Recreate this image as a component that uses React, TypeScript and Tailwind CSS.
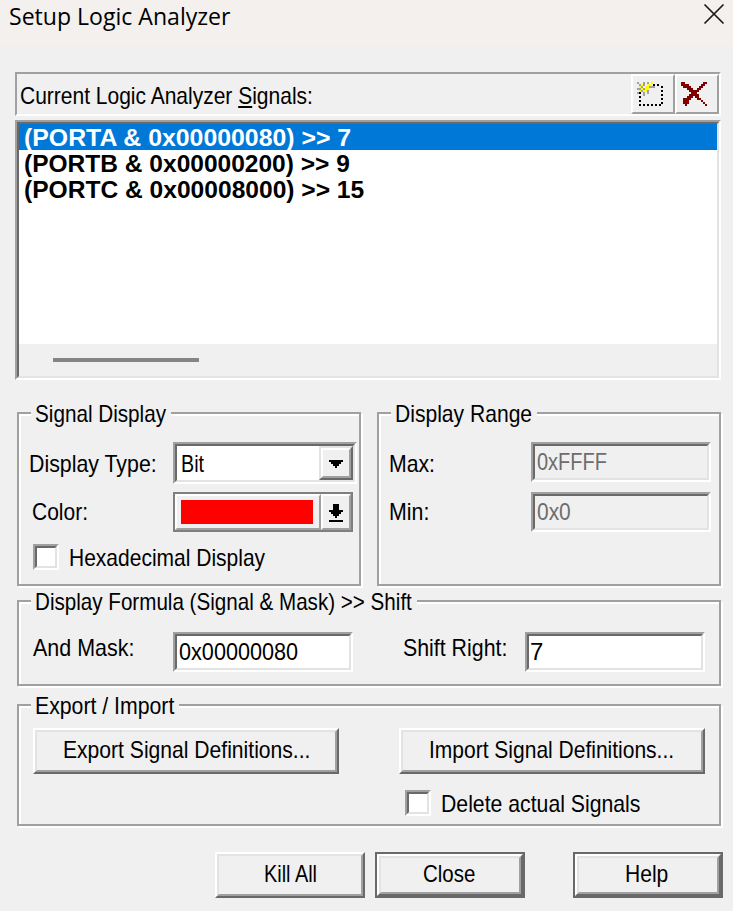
import { useLayoutEffect, useRef, useState, type ReactNode } from "react";
import clsx from "clsx";

/** Single line of dialog text, condensed horizontally to the given width. */
function Fit({ w, className, children }: { w: number; className?: string; children: ReactNode }) {
  const ref = useRef<HTMLSpanElement>(null);
  const [scale, setScale] = useState(1);
  useLayoutEffect(() => {
    if (ref.current) setScale(w / ref.current.offsetWidth);
  }, [w]);
  return (
    <span className={clsx("block h-6 shrink-0 text-[24px] leading-6 whitespace-nowrap", className)} style={{ width: w }}>
      <span
        ref={ref}
        className="inline-block origin-left"
        style={{ transform: `translate(1px, 1px) scaleX(${scale})` }}
      >
        {children}
      </span>
    </span>
  );
}

function Pixels({ rows, className }: { rows: string[]; className?: string }) {
  const colors: Record<string, string> = { G: "#a0a0a0", Y: "#ffff00", K: "#000000", R: "#800000" };
  return (
    <svg width={26} height={26} viewBox="0 0 13 13" shapeRendering="crispEdges" className={className}>
      {rows.flatMap((row, y) =>
        [...row].map((c, x) => (colors[c] ? <rect key={`${x}-${y}`} x={x} y={y} width={1} height={1} fill={colors[c]} /> : null)),
      )}
    </svg>
  );
}

const NEW_ICON = [
  "G..G.G.Y.....",
  ".GYG.YY.K.K..",
  ".YG.YYGGG...K",
  "GGYGYY.......",
  ".YGYYG......K",
  "GK.G.G.......",
  "...G........K",
  ".K...........",
  "............K",
  ".K...........",
  "............K",
  ".K.K.K.K.K.K.",
];

const DELETE_ICON = [
  "RR.........RR",
  "RRRR......RR.",
  ".RRRR....RR..",
  "...RRR..RR...",
  "....RRRRR....",
  ".....RRR.....",
  "....RRRRR....",
  "...RRR.RR....",
  ".RRRR...RR...",
  ".RRR......R..",
  ".RRR.......R.",
  "..R.........R",
];

function Sunken({ className, children }: { className?: string; children?: ReactNode }) {
  return (
    <div className={clsx("shrink-0 border-2 border-t-[#a0a0a0] border-r-white border-b-white border-l-[#a0a0a0]", className)}>
      <div className="flex h-full w-full border-2 border-t-[#696969] border-r-[#e3e3e3] border-b-[#e3e3e3] border-l-[#696969]">
        {children}
      </div>
    </div>
  );
}

function Raised({ className, children }: { className?: string; children?: ReactNode }) {
  return (
    <div className={clsx("shrink-0 border-2 border-t-white border-r-[#696969] border-b-[#696969] border-l-white", className)}>
      <div className="flex h-full w-full justify-center border-2 border-t-[#e3e3e3] border-r-[#a0a0a0] border-b-[#a0a0a0] border-l-[#e3e3e3]">
        {children}
      </div>
    </div>
  );
}

function Check({ className }: { className?: string }) {
  return <Sunken className={clsx("size-[26px] bg-white", className)} />;
}

function Group({ title, w, className, children }: { title: string; w: number; className?: string; children: ReactNode }) {
  return (
    <section
      className={clsx(
        "flex shrink-0 flex-col border-2 border-[#a0a0a0] shadow-[2px_2px_0_#fff,inset_2px_2px_0_#fff]",
        className,
      )}
    >
      <div className="-mt-[13px] ml-3 self-start bg-[#f0f0f0] pr-[6px] pl-[3px]">
        <Fit w={w}>{title}</Fit>
      </div>
      {children}
    </section>
  );
}

export default function App() {
  const signals = [
    { text: "(PORTA & 0x00000080) >> 7", w: 327, selected: true },
    { text: "(PORTB & 0x00000200) >> 9", w: 326, selected: false },
    { text: "(PORTC & 0x00008000) >> 15", w: 340, selected: false },
  ];

  return (
    <div className="flex h-[911px] w-[733px] flex-col overflow-hidden bg-[#f0f0f0] font-['Liberation_Sans',Arial,sans-serif] text-black">
      <header className="flex h-[45px] shrink-0 items-start justify-between bg-[#f4f0ee] pl-2">
        <Fit w={221} className="mt-[3px] font-['Open_Sans',sans-serif]">
          Setup Logic Analyzer
        </Fit>
        <svg width={22} height={22} viewBox="0 0 22 22" className="mt-[3px] mr-2" stroke="#1a1a1a" strokeWidth={1.7}>
          <path d="M1.5 1.5 20.5 20.5M20.5 1.5 1.5 20.5" />
        </svg>
      </header>

      <div className="mt-[27px] ml-[15px] flex h-11 w-[706px] shrink-0 border-2 border-t-[#a0a0a0] border-r-white border-b-white border-l-[#a0a0a0]">
        <div className="flex flex-1 pt-[9px] pl-[2px]">
          <Fit w={293}>
            Current Logic Analyzer <span className="underline decoration-2 underline-offset-2">S</span>ignals:
          </Fit>
        </div>
        <div className="h-10 w-11 border-2 border-t-white border-r-[#a0a0a0] border-b-[#a0a0a0] border-l-white pt-[6px] pl-1">
          <Pixels rows={NEW_ICON} />
        </div>
        <div className="h-10 w-11 border-2 border-t-white border-r-[#a0a0a0] border-b-[#a0a0a0] border-l-white pt-[6px] pl-1">
          <Pixels rows={DELETE_ICON} />
        </div>
      </div>

      <Sunken className="mt-1 ml-[15px] h-[260px] w-[706px]">
        <div className="flex w-full flex-col bg-white">
          {signals.map((s) => (
            <div key={s.text} className={clsx("h-[26px] pt-[1px] pl-1 font-bold", s.selected && "bg-[#0078d7] text-white")}>
              <Fit w={s.w}>{s.text}</Fit>
            </div>
          ))}
          <div className="mt-auto h-8 bg-[#f0f0f0] pt-[14px] pl-[34px]">
            <div className="h-1 w-[146px] bg-[#858585]" />
          </div>
        </div>
      </Sunken>

      <div className="mt-8 ml-[17px] flex shrink-0 gap-4">
        <Group title="Signal Display" w={131} className="h-[174px] w-[344px]">
          <div className="mt-[17px] flex h-[42px]">
            <Fit w={128} className="mt-[9px] ml-[9px]">Display Type:</Fit>
            <Sunken className="ml-[17px] h-[42px] w-[184px] bg-white">
              <Fit w={23} className="mt-[5px] ml-[3px]">Bit</Fit>
              <div className="ml-auto h-[34px] w-[34px] shrink-0 border-2 border-t-[#e3e3e3] border-r-[#696969] border-b-[#696969] border-l-[#e3e3e3] bg-[#f0f0f0]">
                <div className="h-full w-full border-2 border-t-white border-r-[#a0a0a0] border-b-[#a0a0a0] border-l-white">
                  <svg width={26} height={26} viewBox="0 0 13 13" shapeRendering="crispEdges">
                    <path d="M3 5h7v1H9v1H8v1H7v1H6V8H5V7H4V6H3z" />
                  </svg>
                </div>
              </div>
            </Sunken>
          </div>
          <div className="mt-2 flex h-10">
            <Fit w={56} className="mt-[7px] ml-3">Color:</Fit>
            <div className="ml-[86px] flex h-10 w-[180px] border-2 border-[#7f7f7f]">
              <div className="h-9 w-[146px] border-2 border-t-white border-r-[#a0a0a0] border-b-[#a0a0a0] border-l-white pt-1 pl-1">
                <div className="h-6 w-[132px] bg-[#ff0000]" />
              </div>
              <div className="h-9 w-[30px] border-2 border-t-white border-r-[#a0a0a0] border-b-[#a0a0a0] border-l-white">
                <svg width={26} height={32} viewBox="0 0 13 16" shapeRendering="crispEdges">
                  <path d="M5 4h3v3h2v1H9v1H8v1H7v1H6v-1H5V9H4V8H3V7h2zM3 12h7v1H3z" />
                </svg>
              </div>
            </div>
          </div>
          <div className="mt-3 flex">
            <Check className="ml-[14px]" />
            <Fit w={196} className="mt-[1px] ml-[9px]">Hexadecimal Display</Fit>
          </div>
        </Group>

        <Group title="Display Range" w={137} className="h-[174px] w-[344px]">
          <div className="mt-[17px] flex h-[42px]">
            <Fit w={46} className="mt-[9px] ml-[9px]">Max:</Fit>
            <Sunken className="ml-[97px] h-10 w-[180px] text-[#6d6d6d]">
              <Fit w={70} className="mt-[3px] ml-[1px]">0xFFFF</Fit>
            </Sunken>
          </div>
          <div className="mt-2 flex h-10">
            <Fit w={40} className="mt-[7px] ml-[9px]">Min:</Fit>
            <Sunken className="ml-[103px] h-10 w-[180px] text-[#6d6d6d]">
              <Fit w={34} className="mt-[3px] ml-[1px]">0x0</Fit>
            </Sunken>
          </div>
        </Group>
      </div>

      <Group title="Display Formula (Signal & Mask) >> Shift" w={377} className="mt-[14px] ml-[17px] h-[86px] w-[704px]">
        <div className="mt-[19px] flex">
          <Fit w={101} className="mt-[3px] ml-[13px]">And Mask:</Fit>
          <Sunken className="ml-10 h-10 w-[180px] bg-white">
            <Fit w={119} className="mt-[3px] ml-[1px]">0x00000080</Fit>
          </Sunken>
          <Fit w={104} className="mt-[3px] ml-[49px]">Shift Right:</Fit>
          <Sunken className="ml-[19px] h-10 w-[180px] bg-white">
            <Fit w={13}  className="mt-[3px]">7</Fit>
          </Sunken>
        </div>
      </Group>

      <Group title="Export / Import" w={139} className="mt-[18px] ml-[17px] h-[122px] w-[704px]">
        <div className="mt-[11px] flex gap-[60px] pl-[14px]">
          <Raised className="h-[46px] w-[306px]">
            <Fit w={247} className="mt-[5px] -ml-[2px]">Export Signal Definitions...</Fit>
          </Raised>
          <Raised className="h-[46px] w-[306px]">
            <Fit w={245} className="mt-[5px] -ml-[3px]">Import Signal Definitions...</Fit>
          </Raised>
        </div>
        <div className="mt-4 flex pl-[386px]">
          <Check />
          <Fit w={199} className="mt-[1px] ml-[9px]">Delete actual Signals</Fit>
        </div>
      </Group>

      <div className="mt-[26px] flex shrink-0 pl-[215px]">
        <Raised className="h-[46px] w-[150px]">
          <Fit w={53} className="mt-[5px] -ml-[2px]">Kill All</Fit>
        </Raised>
        <div className="ml-[10px] h-[46px] w-[150px] border-2 border-[#696969]">
          <Raised className="h-[42px] w-[146px]">
            <Fit w={52} className="mt-[3px] -ml-[5px]">Close</Fit>
          </Raised>
        </div>
        <div className="ml-12 h-[46px] w-[150px] border-2 border-[#696969]">
          <Raised className="h-[42px] w-[146px]">
            <Fit w={43} className="mt-[3px] -ml-[5px]">Help</Fit>
          </Raised>
        </div>
      </div>
    </div>
  );
}
